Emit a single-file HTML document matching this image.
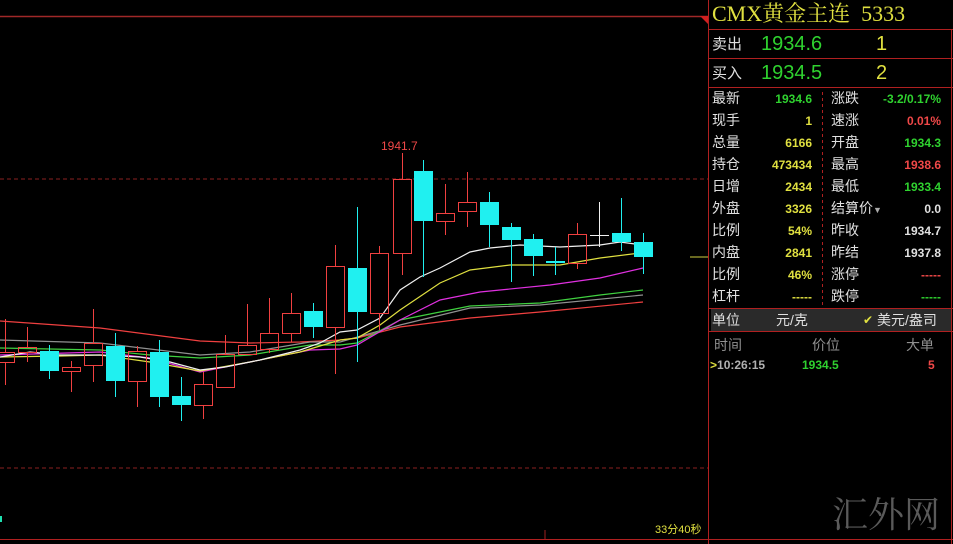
<!DOCTYPE html>
<html><head><meta charset="utf-8"><style>
body{margin:0;background:#000;width:953px;height:544px;overflow:hidden;position:relative;font-family:"Liberation Sans","Noto Sans CJK SC",sans-serif}
.t{position:absolute;white-space:nowrap;line-height:1}
.l{color:#e0e0e0;font-size:14px}
.v{font-size:12px;font-weight:bold;text-align:right}
.g{color:#2fd22f}.y{color:#e0e040}.r{color:#f04848}.w{color:#e0e0e0}
</style></head><body>
<svg width="953" height="544" style="position:absolute;left:0;top:0">
<line x1="0" y1="16.5" x2="708" y2="16.5" stroke="#a02828" stroke-width="1.5"/>
<line x1="708.5" y1="0" x2="708.5" y2="544" stroke="#b02020"/>
<line x1="0" y1="539.5" x2="953" y2="539.5" stroke="#b02020"/>
<polygon points="700,16 708,16 708,24" fill="#d02020"/>
<line x1="0" y1="179" x2="708" y2="179" stroke="#8a2020" stroke-dasharray="4,3"/>
<line x1="0" y1="468" x2="708" y2="468" stroke="#8a2020" stroke-dasharray="4,3"/>
<line x1="545" y1="530" x2="545" y2="539" stroke="#a02020"/>
<rect x="0" y="516" width="2" height="6" fill="#1ee0b0"/>
<g stroke="#b02020" fill="none">
<line x1="709" y1="29.5" x2="953" y2="29.5"/><line x1="709" y1="58.5" x2="953" y2="58.5"/><line x1="709" y1="87.5" x2="953" y2="87.5"/>
<line x1="951.5" y1="29" x2="951.5" y2="544"/>
<line x1="709" y1="308.5" x2="953" y2="308.5"/><line x1="709" y1="331.5" x2="953" y2="331.5"/>
<line x1="822.5" y1="92" x2="822.5" y2="305" stroke-dasharray="3,3"/>
</g>
<rect x="711" y="309" width="240" height="22" fill="#2a2a2a"/>
<line x1="690" y1="257" x2="708" y2="257" stroke="#d0d040"/>
<g fill="none" stroke-width="1.2">
<polyline stroke="#f04040" points="0,321 100,328 200,341 250,343 300,342 340,340 357,338 400,327 470,318 540,312 643,302"/>
<polyline stroke="#909090" points="0,340 100,343 200,355 250,352 310,342 340,342 400,325 470,308 540,305 643,295"/>
<polyline stroke="#40d040" points="0,348 100,350 150,355 200,358 250,355 310,345 340,345 357,343 400,320 470,306 540,303 600,295 643,290"/>
<polyline stroke="#e030e0" points="0,355 100,352 150,358 200,372 250,362 310,350 340,349 357,345 400,320 440,300 480,292 550,285 600,278 643,268"/>
<polyline stroke="#e0e040" points="0,357 60,356 100,355 150,362 200,371 250,362 300,352 340,340 357,338 380,325 400,310 440,283 470,270 510,265 560,265 600,258 640,253"/>
<polyline stroke="#f0f0f0" points="0,357 30,352 60,355 100,355 140,357 170,362 200,370 225,367 260,360 300,350 320,343 340,332 357,330 380,318 400,290 420,277 440,268 470,252 490,248 520,245 560,247 600,245 620,242 643,245"/>
</g>
<g id="c"></g>
<text x="381" y="150" fill="#f04848" font-size="12" font-family="Liberation Sans">1941.7</text>
</svg>
<script>
var C=[[5,352,362,319,385,'r'],[27,347,352,327,362,'r'],[49,351,371,345,379,'c'],[71,367,371,361,392,'r'],[93,343,365,309,382,'r'],[115,346,381,333,397,'c'],[137,351,381,346,407,'r'],[159,352,397,340,407,'c'],[181,396,405,377,421,'c'],[203,384,405,372,419,'r'],[225,354,387,335,388,'r'],[247,345,354,304,354,'r'],[269,333,349,298,353,'r'],[291,313,333,293,342,'r'],[313,311,327,303,338,'c'],[335,266,327,245,374,'r'],[357,268,312,207,362,'c'],[379,253,313,246,330,'r'],[402,179,253,153,275,'r'],[423,171,221,160,277,'c'],[445,213,221,184,235,'r'],[467,202,211,172,227,'r'],[489,202,225,192,247,'c'],[511,227,240,223,282,'c'],[533,239,256,234,276,'c'],[555,261,263,247,275,'c'],[577,234,263,223,269,'r'],[599,235,235,202,247,'w'],[621,233,242,198,251,'c'],[643,242,257,233,274,'c']];
var s='';C.forEach(function(a){var x=a[0],t=a[1],b=a[2],wt=a[3],wb=a[4],k=a[5];
var col=k=='r'?'#f04040':k=='c'?'#20f0f0':'#f0f0f0';
if(k=='r'){s+='<line x1="'+(x+.5)+'" y1="'+wt+'" x2="'+(x+.5)+'" y2="'+t+'" stroke="'+col+'"/><line x1="'+(x+.5)+'" y1="'+b+'" x2="'+(x+.5)+'" y2="'+wb+'" stroke="'+col+'"/><rect x="'+(x-8.5)+'" y="'+(t+.5)+'" width="18" height="'+Math.max(b-t,2)+'" fill="none" stroke="'+col+'"/>';}
else if(k=='c'){s+='<line x1="'+(x+.5)+'" y1="'+wt+'" x2="'+(x+.5)+'" y2="'+wb+'" stroke="'+col+'"/><rect x="'+(x-9)+'" y="'+t+'" width="19" height="'+Math.max(b-t,2)+'" fill="'+col+'"/>';}
else{s+='<line x1="'+(x+.5)+'" y1="'+wt+'" x2="'+(x+.5)+'" y2="'+wb+'" stroke="'+col+'"/><line x1="'+(x-9)+'" y1="'+(t+.5)+'" x2="'+(x+10)+'" y2="'+(t+.5)+'" stroke="'+col+'"/>';}
});document.getElementById('c').innerHTML=s;
</script>
<div class="t" style="left:712px;top:3px;font-size:22px;color:#e0e040;font-family:'Liberation Serif','Noto Serif CJK SC',serif">CMX黄金主连&nbsp;&nbsp;5333</div>
<div class="t l" style="left:712px;top:37px;font-size:15px">卖出</div>
<div class="t g" style="left:761px;top:34px;font-size:20px">1934.6</div>
<div class="t y" style="left:876px;top:34px;font-size:20px">1</div>
<div class="t l" style="left:712px;top:66px;font-size:15px">买入</div>
<div class="t g" style="left:761px;top:63px;font-size:20px">1934.5</div>
<div class="t y" style="left:876px;top:63px;font-size:20px">2</div>
<div id="rows"></div>
<div class="t l" style="left:712px;top:313px">单位</div>
<div class="t l" style="left:776px;top:313px">元/克</div>
<div class="t y" style="left:863px;top:314px;font-size:12px">✔</div>
<div class="t l" style="left:877px;top:313px">美元/盎司</div>
<div class="t" style="left:714px;top:338px;font-size:14px;color:#909090">时间</div>
<div class="t" style="left:812px;top:338px;font-size:14px;color:#909090">价位</div>
<div class="t" style="left:906px;top:338px;font-size:14px;color:#909090">大单</div>
<div class="t" style="left:710px;top:359px;font-size:12px;font-weight:bold;color:#b0b0b0"><span class="y">&gt;</span>10:26:15</div>
<div class="t g" style="left:802px;top:359px;font-size:12px;font-weight:bold">1934.5</div>
<div class="t r" style="left:928px;top:359px;font-size:12px;font-weight:bold">5</div>
<div class="t" style="left:832px;top:497px;font-size:36px;color:#5a5a5a;font-family:'Liberation Serif','Noto Serif CJK SC',serif">汇外网</div>
<div class="t y" style="left:655px;top:525px;font-size:11px">33分40秒</div>
<script>
var R=[['最新','1934.6','g','涨跌','-3.2/0.17%','g'],['现手','1','y','速涨','0.01%','r'],['总量','6166','y','开盘','1934.3','g'],['持仓','473434','y','最高','1938.6','r'],['日增','2434','y','最低','1933.4','g'],['外盘','3326','y','结算价<span style="font-size:9px;color:#aaa">▼</span>','0.0','w'],['比例','54%','y','昨收','1934.7','w'],['内盘','2841','y','昨结','1937.8','w'],['比例','46%','y','涨停','-----','r'],['杠杆','-----','y','跌停','-----','g']];
var h='';R.forEach(function(r,i){var y=91+i*22;
h+='<div class="t l" style="left:712px;top:'+y+'px">'+r[0]+'</div><div class="t v '+r[2]+'" style="right:141px;top:'+(y+2)+'px">'+r[1]+'</div><div class="t l" style="left:831px;top:'+y+'px">'+r[3]+'</div><div class="t v '+r[5]+'" style="right:12px;top:'+(y+2)+'px">'+r[4]+'</div>';});
document.getElementById('rows').innerHTML=h;
</script>
</body></html>
